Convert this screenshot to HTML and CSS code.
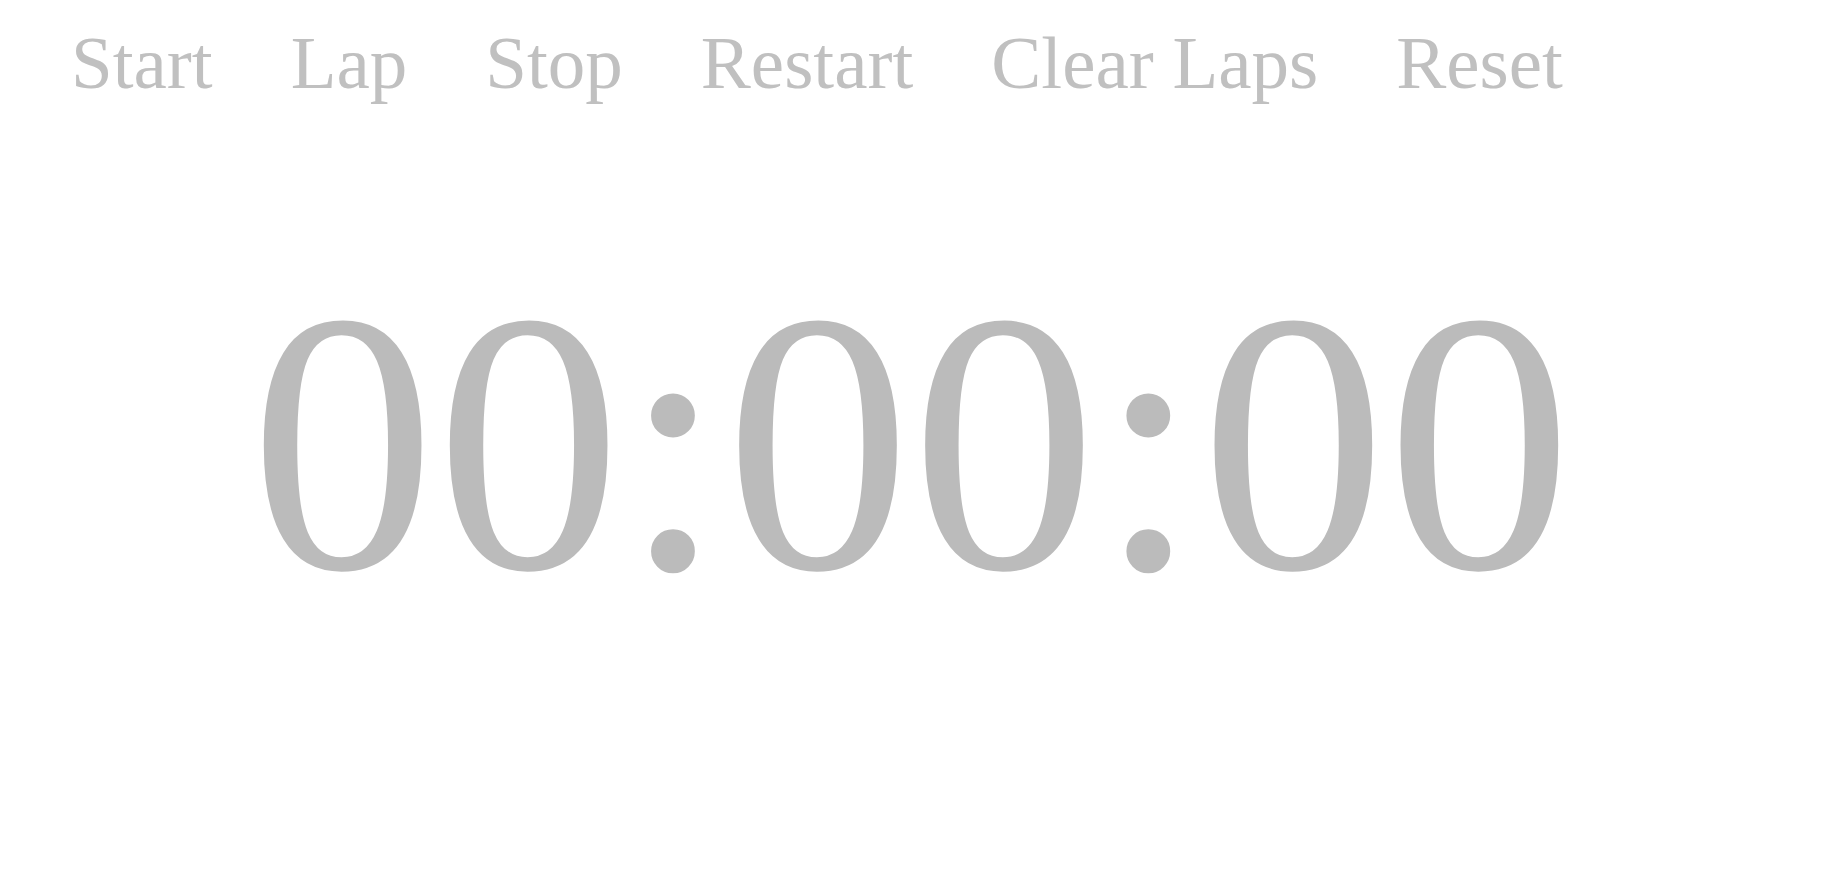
FILE: index.html
```
<!DOCTYPE html>
<html lang="en">
<head>
<meta charset="utf-8">
<title>Stopwatch</title>
<link rel="stylesheet" href="styles.css">
</head>
<body>
<div class="controls">
  <button class="control">Start</button>
  <button class="control">Lap</button>
  <button class="control">Stop</button>
  <button class="control">Restart</button>
  <button class="control">Clear Laps</button>
  <button class="control">Reset</button>
</div>
<div class="time">00:00:00</div>
</body>
</html>
```
FILE: styles.css
```
html, body {
  margin: 0;
  padding: 0;
  background: #ffffff;
}
body {
  font-family: "Liberation Serif", "Times New Roman", serif;
}
.controls {
  display: flex;
  gap: 78px;
  padding: 25px 0 0 71px;
}
.control {
  background: none;
  border: none;
  padding: 0;
  margin: 0;
  font-family: inherit;
  font-size: 75px;
  line-height: 1;
  color: #c0c0c0;
  cursor: pointer;
}
.time {
  margin-top: 157px;
  text-align: center;
  font-size: 372px;
  line-height: 1;
  color: #bbbbbb;
  white-space: nowrap;
}
```
